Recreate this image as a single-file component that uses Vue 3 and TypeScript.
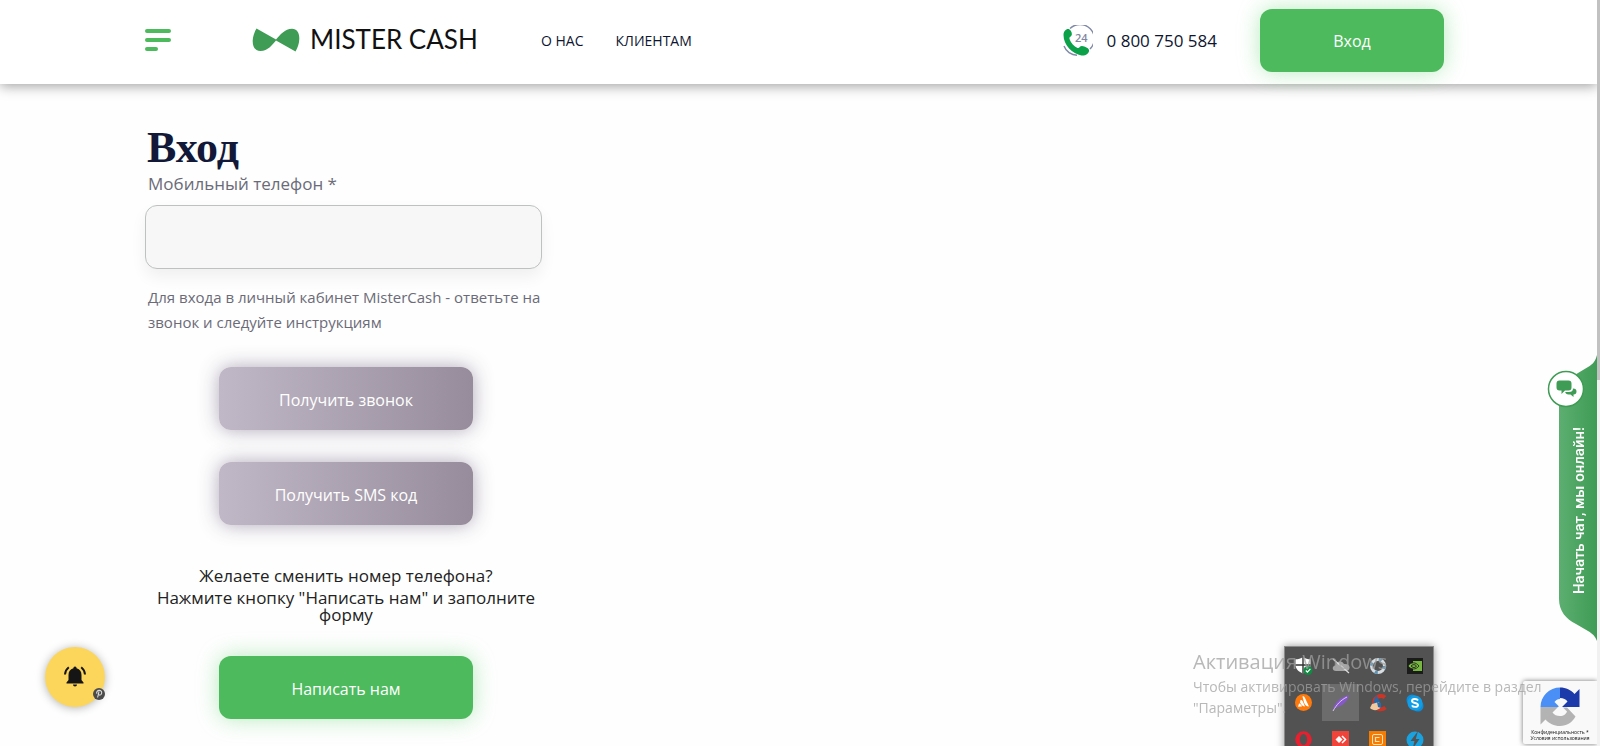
<script setup lang="ts">
import { ref } from 'vue'

const phone = ref('')
const navLinks: string[] = ['О НАС', 'КЛИЕНТАМ']
const codeButtons: string[] = ['Получить звонок', 'Получить SMS код']
</script>

<template>
  <div class="page">
    <header class="header">
      <button class="menu" type="button" aria-label="Меню">
        <span class="bar"></span>
        <span class="bar"></span>
        <span class="bar short"></span>
      </button>
      <a class="logo" href="#">
        <svg width="48" height="24" viewBox="0 0 48 24" aria-hidden="true">
          <path
            d="M4.5 0.5 L24 11.5 C28 7 33 0.8 40 0.8 C45 0.8 47.5 5 47.3 11 C47.2 16 45.5 20 43.5 23.5 L24 12.5 C20 17 16 23 8.500 23 C3 23 0.500 18.500 0.700 12.500 C0.900 8 2.500 4 4.500 0.500 Z"
            fill="#3f9c55"
          />
        </svg>
        <span class="brand">MISTER CASH</span>
      </a>
      <nav class="nav">
        <a v-for="link in navLinks" :key="link" href="#">{{ link }}</a>
      </nav>
      <a class="phone" href="tel:0800750584">
        <svg width="30" height="32" viewBox="0 0 30 32" aria-hidden="true">
          <path d="M7 3.500 A14 14 0 0 1 27 24 M1 21 A14 14 0 0 0 14 30.200" fill="none" stroke="#8089a6" stroke-width="1.400" />
          <path
            d="M0.500 10 C0.500 6 4 3 6.500 4.500 C8.500 6 9.500 9 8.500 10.500 C7.500 12 6 12 6.500 14 C8 18 11 21.500 14.500 23 C16.500 23.600 16.500 21 19 21 C22 21.500 25.500 23 26 25 C26.500 28.500 22 31 18.500 30.500 C9.500 29 0.500 20 0.500 10 Z"
            fill="#0aa148"
          />
          <text x="12" y="17" font-size="11" font-weight="600" font-family="Open Sans, sans-serif" fill="#7f88a2">24</text>
        </svg>
        <span>0 800 750 584</span>
      </a>
      <button class="btn login" type="button">Вход</button>
    </header>

    <main class="content">
      <form class="form" @submit.prevent>
        <h1>Вход</h1>
        <label for="phone">Мобильный телефон *</label>
        <input id="phone" v-model="phone" type="tel" />
        <p class="help">Для входа в личный кабинет MisterCash - ответьте на звонок и следуйте инструкциям</p>
        <div class="actions">
          <button v-for="b in codeButtons" :key="b" class="btn muted" type="button">{{ b }}</button>
        </div>
        <div class="question">
          <p>Желаете сменить номер телефона?</p>
          <p>Нажмите кнопку "Написать нам" и заполните форму</p>
        </div>
        <button class="btn write" type="button">Написать нам</button>
      </form>
    </main>

    <button class="bell" type="button" aria-label="Уведомления">
      <svg width="22" height="22" viewBox="0 0 22 22" aria-hidden="true">
        <path d="M11 0.500 a1.600 1.600 0 0 1 1.600 1.700 C16 3 17.500 5.500 17.500 9 V14 L19.500 16.500 V17.500 H2.500 V16.500 L4.500 14 V9 C4.500 5.500 6 3 9.400 2.200 A1.600 1.600 0 0 1 11 0.500 Z M9 18.500 h4 a2 2 0 0 1 -4 0 Z" fill="#151515" />
        <path d="M4.800 1.200 C2.500 3 1.200 5.200 1 8.500 M17.200 1.200 C19.500 3 20.800 5.200 21 8.500" fill="none" stroke="#151515" stroke-width="2" />
      </svg>
      <svg class="badge" width="12" height="12" viewBox="0 0 12 12" aria-hidden="true">
        <circle cx="6" cy="6" r="6" fill="#4b4b4b" />
        <path d="M4.600 9.500 L6 3.500 M4 5.800 C3 4 4.500 2.300 6.400 2.400 C8.600 2.500 9.300 4.600 8.200 6.300 C7.500 7.300 6.200 7.300 5.600 6.500" fill="none" stroke="#ddd" stroke-width="1.100" />
      </svg>
    </button>

    <button class="chat" type="button">
      <svg class="chat-shape" width="38" height="286" viewBox="0 0 38 286" aria-hidden="true">
        <defs>
          <linearGradient id="chatFill">
            <stop offset="0" stop-color="#5cae70" />
            <stop offset="1" stop-color="#3f9c55" />
          </linearGradient>
        </defs>
        <path d="M38 0 C36 7 34 9 29 12 L14 21 C5 26 0 33 0 42 V244 C0 256 7 264 17 269 L29 276 C34 279 36 281 38 286 Z" fill="url(#chatFill)" />
      </svg>
      <svg class="chat-icon" width="38" height="38" viewBox="0 0 38 38" aria-hidden="true">
        <circle cx="19" cy="19" r="17.500" fill="#fff" stroke="#3f9c55" stroke-width="1.500" />
        <path d="M12.500 10.500 h9 a3 3 0 0 1 3 3 v4 a3 3 0 0 1 -3 3 h-3.500 l-3.500 3.500 v-3.500 h-2 a3 3 0 0 1 -3 -3 v-4 a3 3 0 0 1 3 -3 Z" fill="#3f9c55" />
        <path d="M26 18.500 c2.500 0 3.500 1 3.500 3 c0 2 -1 3 -3 3 v2.500 l-3 -2.500 h-2 c-2 0 -3 -1 -3.300 -2.500 h3.500 c3 0 4.300 -1 4.300 -3.500 Z" fill="#3f9c55" />
      </svg>
      <span class="chat-text">Начать чат, мы онлайн!</span>
    </button>

    <aside class="captcha">
      <svg width="40" height="40" viewBox="0 0 40 40" aria-hidden="true">
        <path d="M0.500 20 A19.500 19.500 0 0 1 20 0.500 V12 C17 12 15.500 13.500 14.500 15 L18.500 19 V20 Z" fill="#4a8ff5" />
        <path d="M20 0.500 C26 0.500 31 3 34.500 7 L39.500 2 V20 H22 L27.500 14.500 C26 12.500 23.500 11 20 11 Z" fill="#1c3aa9" />
        <path d="M0.500 20 H18 L12.500 25.500 C14 28 17 29 20 29 C24 29 26 27 27 24.500 L23 20.500 H27 L35.500 29.500 C32 35.500 27 39 20 39 C14 39 9 36.500 5.500 32.500 L0.500 37.500 Z" fill="#b3b3b3" />
      </svg>
      <span>Конфиденциальность *</span>
      <span>Условия использования</span>
    </aside>

    <aside class="tray" aria-hidden="true">
      <div class="cell">
        <svg width="18" height="18" viewBox="0 0 18 18">
          <path d="M8 0 C10 1.800 13 2.300 15.500 2.300 V8 C15.500 12 12 15 8 16.500 C4 15 0.500 12 0.500 8 V2.300 C3 2.300 6 1.800 8 0 Z" fill="#fff" />
          <path d="M8 0 V16.500 M0.500 8 H15.500" stroke="#333" stroke-width="1.400" />
          <circle cx="13" cy="13.500" r="4.500" fill="#128a43" />
          <path d="M10.800 13.500 l1.600 1.700 l3 -3.400" fill="none" stroke="#fff" stroke-width="1.200" />
        </svg>
      </div>
      <div class="cell">
        <svg width="18" height="18" viewBox="0 0 18 18">
          <path d="M4 14 C0 14 -0.500 9 3.500 8.500 C4 4 10 3 12 7 C16 6.500 18 9 17.500 11 C17.200 13 16 14 14 14 Z" fill="#a6a6a6" />
          <path d="M1 2 L17 16" stroke="#ddd" stroke-width="1.200" />
        </svg>
      </div>
      <div class="cell">
        <svg width="18" height="18" viewBox="0 0 18 18">
          <circle cx="9" cy="9" r="6.500" fill="none" stroke="#d7dde0" stroke-width="3" />
          <circle cx="9" cy="9" r="6.500" fill="none" stroke="#5993b6" stroke-width="3" stroke-dasharray="3 7.200" />
        </svg>
      </div>
      <div class="cell">
        <svg width="16" height="16" viewBox="0 0 16 16">
          <rect width="16" height="16" fill="#1b1b1b" />
          <path d="M6 3 H15 V13 H6 Z" fill="#76b83f" />
          <path d="M1 8 C4 3.500 9 4 12 8 C9 12 4 12 1 8 Z" fill="#76b83f" stroke="#1b1b1b" stroke-width="0.800" />
          <path d="M4 8 C6 6 8 6.500 9.500 8 C8 10 6 10 4 8 Z" fill="none" stroke="#1b1b1b" />
        </svg>
      </div>
      <div class="cell">
        <svg width="17" height="17" viewBox="0 0 17 17">
          <circle cx="8.500" cy="8.500" r="8.500" fill="#ff7a0c" />
          <path d="M7.500 2.500 C8.500 2 9.500 2.800 10 4 L14 12.500 C11.500 12.500 10 11 9 8.500 Z" fill="#fff" />
          <path d="M5.500 6 C7 5.500 8 7 8.500 9 L10 12.500 C8 12.500 6.500 11 5 8.500 Z" fill="#fff" />
          <path d="M4 9.500 C5.500 9.500 6.500 11.500 7 12.500 L3 12.800 Z" fill="#fff" />
        </svg>
      </div>
      <div class="cell active">
        <svg width="18" height="18" viewBox="0 0 18 18">
          <path d="M1 16 C2 9 8 3 17 1 C16 6 12 12 4 13.500 Z" fill="#8658c8" />
          <path d="M1 17 C5 10 9 6 15 3" fill="none" stroke="#dcc9f4" />
        </svg>
      </div>
      <div class="cell">
        <svg width="18" height="18" viewBox="0 0 18 18">
          <path d="M16 3.500 C12 0 5 3 5 9 C5 15 12 17 16.500 13.500" fill="none" stroke="#c93527" stroke-width="4" />
          <path d="M7 1 L11 8 L4 10 Z" fill="#2368a8" />
          <path d="M3 10 L10 8 L12 13 C9 17 4 17 1 14 Z" fill="#f1c9a0" />
          <path d="M8 8 L12 9 L12 14 L9 13 Z" fill="#296cad" />
        </svg>
      </div>
      <div class="cell">
        <svg width="18" height="18" viewBox="0 0 18 18">
          <circle cx="6" cy="6" r="5.500" fill="#0b8fdb" />
          <circle cx="12" cy="12" r="5.500" fill="#0b8fdb" />
          <circle cx="9" cy="9" r="7.500" fill="#119ee8" />
          <path d="M12 6.500 C11 4.500 6 4.500 6 7 C6 9.500 12 8.500 12 11 C12 13.500 7 13.500 6 11.300" fill="none" stroke="#fff" stroke-width="1.900" />
        </svg>
      </div>
      <div class="cell">
        <svg width="17" height="17" viewBox="0 0 17 17">
          <circle cx="8.500" cy="8.500" r="8.300" fill="#e5202f" />
          <ellipse cx="8.500" cy="8.500" rx="3.600" ry="5.600" fill="#525252" />
        </svg>
      </div>
      <div class="cell">
        <svg width="17" height="17" viewBox="0 0 17 17">
          <rect width="17" height="17" fill="#f0443a" />
          <path d="M7 5 L10.500 8.500 L7 12 L3.500 8.500 Z" fill="#fff" />
          <path d="M10 5 L13.500 8.500 L10 12" fill="none" stroke="#fff" stroke-width="1.500" />
        </svg>
      </div>
      <div class="cell">
        <svg width="17" height="17" viewBox="0 0 17 17">
          <rect width="17" height="17" fill="#f57c00" />
          <rect x="3.500" y="3.500" width="10" height="10" rx="1.500" fill="none" stroke="#ffe0bd" />
          <path d="M10.500 6.500 H6.500 V10.500 H10.500" fill="none" stroke="#ffe0bd" stroke-width="1.200" />
        </svg>
      </div>
      <div class="cell">
        <svg width="18" height="18" viewBox="0 0 18 18">
          <circle cx="9" cy="9" r="8.500" fill="#18a3e0" />
          <path d="M12 0 L4.500 10 H8.500 L6.500 18 L13.500 8 H9.800 Z" fill="#525252" />
        </svg>
      </div>
    </aside>

    <div class="watermark">
      <p class="wm-title">Активация Windows</p>
      <p>Чтобы активировать Windows, перейдите в раздел "Параметры".</p>
    </div>

    <div class="scrollbar" aria-hidden="true"><div class="thumb"></div></div>
  </div>
</template>

<style>
html,
body {
  margin: 0;
  background: #fefefe;
}
</style>

<style scoped>
.page {
  min-height: 100vh;
  box-sizing: border-box;
  padding-bottom: 24px;
  font-family: 'Open Sans', 'Noto Sans', sans-serif;
  color: #0e1530;
}

.page *,
.page *::before {
  box-sizing: border-box;
}

p,
h1 {
  margin: 0;
}

a {
  color: inherit;
  text-decoration: none;
}

button {
  border: 0;
  padding: 0;
  font: inherit;
  cursor: pointer;
}

.header {
  display: flex;
  align-items: center;
  height: 84px;
  margin-right: 3px;
  padding: 0 153px 4px 145px;
  background: #fff;
  box-shadow: 0 2px 12px rgba(0, 0, 0, 0.38);
}

.menu {
  display: flex;
  flex-direction: column;
  gap: 5px;
  width: 26px;
  background: none;
}

.bar {
  width: 26px;
  height: 4px;
  border-radius: 2px;
  background: #4cba5d;
}

.bar.short {
  width: 13px;
}

.logo {
  display: flex;
  align-items: center;
  gap: 10px;
  width: 230px;
  margin-left: 81px;
}

.brand {
  padding-bottom: 2px;
  font-family: Lato, sans-serif;
  font-size: 26px;
  line-height: 28px;
  white-space: nowrap;
  color: #111;
}

.nav {
  display: flex;
  gap: 32px;
  margin-left: 59px;
  padding-top: 2px;
  font-size: 14px;
  line-height: 20px;
}

.phone {
  display: flex;
  align-items: center;
  gap: 14px;
  margin-left: auto;
  padding-top: 2px;
  font-size: 17px;
  line-height: 24px;
  white-space: nowrap;
}

.btn {
  display: block;
  height: 63px;
  padding-top: 2px;
  border-radius: 12px;
  color: #fff;
  font-size: 16px;
  line-height: 24px;
  font-weight: 500;
  background: #4cba5d;
  box-shadow: 0 0 22px rgba(76, 206, 93, 0.4);
}

.login {
  width: 184px;
  margin-left: 43px;
}

.content {
  padding: 40px 153px 0 145px;
}

.form {
  width: 402px;
  display: flex;
  flex-direction: column;
}

h1 {
  padding-left: 2px;
  font-family: 'Liberation Serif', serif;
  font-size: 44px;
  line-height: 48px;
  font-weight: 700;
  color: #121838;
}

label {
  padding-left: 3px;
  font-size: 17px;
  line-height: 24px;
  font-weight: 400;
  color: #6b6b78;
}

input {
  width: 397px;
  height: 64px;
  margin-top: 9px;
  padding: 0 16px;
  border: 1px solid #bfc1c1;
  border-radius: 12px;
  background: #f7f7f7;
  font: inherit;
  box-shadow: 0 8px 16px rgba(0, 0, 0, 0.06);
}

.help {
  margin-top: 16px;
  padding-left: 3px;
  font-size: 15px;
  line-height: 25px;
  font-weight: 400;
  color: #6b6b78;
}

.actions {
  display: flex;
  flex-direction: column;
  align-items: center;
  gap: 32px;
  margin-top: 32px;
}

.muted,
.write {
  width: 254px;
}

.muted {
  background: linear-gradient(90deg, #c1b8c7, #968c9b);
  box-shadow: 0 0 20px rgba(80, 64, 100, 0.45);
}

.question {
  display: flex;
  flex-direction: column;
  gap: 5px;
  margin-top: 42px;
  text-align: center;
  font-size: 17px;
  line-height: 17px;
  font-weight: 400;
  color: #222;
}

.write {
  align-self: center;
  margin-top: 33px;
}

.bell {
  position: fixed;
  left: 45px;
  bottom: 39px;
  display: flex;
  align-items: center;
  justify-content: center;
  width: 60px;
  height: 60px;
  border-radius: 50%;
  background: #fcd65b;
  box-shadow: 0 1px 10px rgba(0, 0, 0, 0.3);
}

.badge {
  position: absolute;
  right: 0;
  bottom: 7px;
}

.chat {
  position: fixed;
  right: 3px;
  top: 355px;
  width: 38px;
  height: 286px;
  background: none;
}

.chat-shape {
  display: block;
}

.chat-icon {
  position: absolute;
  left: -12px;
  top: 15px;
}

.chat-text {
  position: absolute;
  left: 10px;
  bottom: 47px;
  writing-mode: vertical-rl;
  transform: rotate(180deg);
  font-family: Roboto, sans-serif;
  font-size: 15px;
  line-height: 20px;
  font-weight: 500;
  white-space: nowrap;
  color: #fff;
}

.captcha {
  position: fixed;
  right: 3px;
  bottom: 2px;
  display: flex;
  flex-direction: column;
  align-items: center;
  width: 74px;
  height: 63px;
  padding-top: 6px;
  border-radius: 2px 0 0 2px;
  background: #f9f9f9;
  box-shadow: 0 0 5px rgba(0, 0, 0, 0.55);
  font-size: 5px;
  line-height: 6px;
  color: #111;
  white-space: nowrap;
}

.captcha svg {
  margin-bottom: 2px;
}

.tray {
  position: fixed;
  right: 166px;
  bottom: -13px;
  display: grid;
  grid-template-columns: repeat(4, 37px);
  grid-auto-rows: 37px;
  border: 1px solid #8b8b8b;
  background: #525252;
  box-shadow: 0 0 8px rgba(0, 0, 0, 0.4);
}

.cell {
  display: flex;
  align-items: center;
  justify-content: center;
}

.active {
  background: #6c6c6c;
}

.watermark {
  position: fixed;
  right: 43px;
  bottom: 28px;
  width: 364px;
  font-size: 14px;
  line-height: 21px;
  color: rgba(160, 160, 160, 0.75);
  pointer-events: none;
}

.wm-title {
  font-size: 20px;
  line-height: 28px;
}

.scrollbar {
  position: fixed;
  top: 0;
  right: 0;
  bottom: 0;
  width: 3px;
  background: #f1f1f1;
}

.thumb {
  height: 51%;
  background: #c1c1c1;
}
</style>
